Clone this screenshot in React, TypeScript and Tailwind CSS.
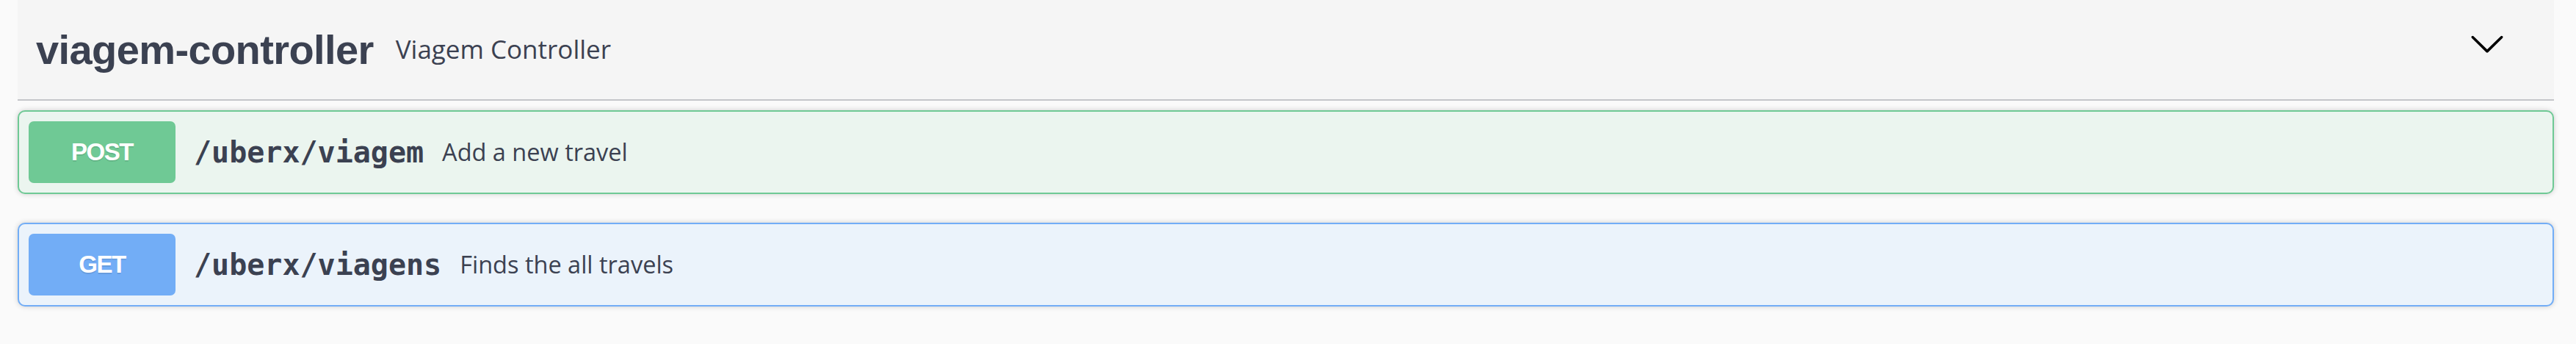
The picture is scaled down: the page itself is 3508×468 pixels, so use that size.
import React from 'react';

type Op = {
  method: string;
  path: string;
  summary: string;
  border: string;
  bg: string;
  badge: string;
};

const ops: Op[] = [
  {
    method: 'POST',
    path: '/uberx/viagem',
    summary: 'Add a new travel',
    border: 'border-[#6fc995]',
    bg: 'bg-[#ebf5ef]',
    badge: 'bg-[#6fc995]',
  },
  {
    method: 'GET',
    path: '/uberx/viagens',
    summary: 'Finds the all travels',
    border: 'border-[#72adf6]',
    bg: 'bg-[#ebf3fb]',
    badge: 'bg-[#72adf6]',
  },
];

const Chevron = () => (
  <svg width="50" height="50" viewBox="0 0 20 20" className="mb-[17px] shrink-0" aria-hidden="true">
    <path
      fill="#000"
      d="M17.418 6.109c.272-.268.709-.268.979 0s.271.701 0 .969l-7.908 7.83c-.27.268-.707.268-.979 0l-7.908-7.83c-.27-.268-.27-.701 0-.969.271-.268.709-.268.979 0L10 13.25l7.418-7.141z"
    />
  </svg>
);

const Operation = ({ op }: { op: Op }) => (
  <div
    className={`flex items-center rounded-[10px] border-2 ${op.border} ${op.bg} p-[13px] shadow-[0_0_7px_rgba(0,0,0,0.19)]`}
  >
    <span
      className={`flex h-[84px] w-[200px] shrink-0 items-center justify-center rounded-[7px] ${op.badge} font-['Liberation_Sans',sans-serif] text-[33px] font-bold tracking-[-1.5px] text-white [text-shadow:0_2px_0_rgba(0,0,0,0.1)]`}
    >
      {op.method}
    </span>
    <span className="px-[25px] font-['DejaVu_Sans_Mono',monospace] text-[40px] font-bold text-[#3b4151]">
      {op.path}
    </span>
    <span className="font-['Open_Sans',sans-serif] text-[32.5px] text-[#3b4151]">{op.summary}</span>
  </div>
);

const App = () => {
  return (
    <div className="min-h-screen bg-[#fafafa] pl-[24px] pr-[30px]">
      <div className="flex h-[137px] items-center border-b-2 border-[#c4c5c9] bg-[#f5f5f5] pl-[25px] pr-[66px]">
        <h3 className="font-['Liberation_Sans',sans-serif] text-[56px] font-bold tracking-[-0.6px] text-[#3b4151]">
          viagem-controller
        </h3>
        <small className="flex-1 pl-[30px] font-['Open_Sans',sans-serif] text-[35px] text-[#3b4151]">
          Viagem Controller
        </small>
        <Chevron />
      </div>
      <div className="mt-[13px] flex flex-col gap-[39px]">
        {ops.map((op) => (
          <Operation key={op.method} op={op} />
        ))}
      </div>
    </div>
  );
};

export default App;
